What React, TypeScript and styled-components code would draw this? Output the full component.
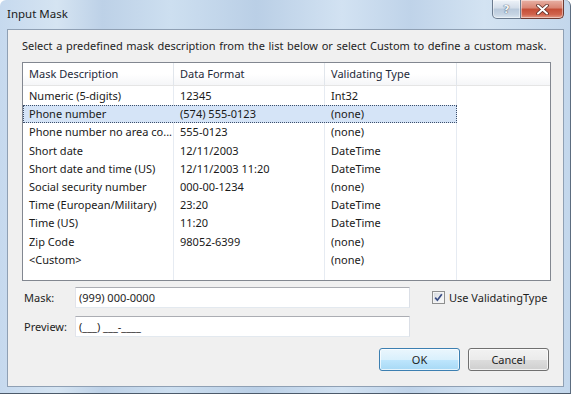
import React from "react";
import styled, { createGlobalStyle } from "styled-components";

const GlobalStyle = createGlobalStyle`
  html, body {
    margin: 0;
    padding: 0;
    background: #ffffff;
  }
  body {
    font-family: "Noto Sans", "Open Sans", sans-serif;
    font-size: 11px;
    color: #000;
  }
`;

const Window = styled.div`
  box-sizing: border-box;
  width: 571px;
  height: 394px;
  display: flex;
  flex-direction: column;
  padding: 0 6px 6px 7px;
  border-right: 1px solid #5c6d80;
  border-bottom: 1px solid #4c5a6a;
  border-radius: 6px 6px 0 0;
  background: linear-gradient(
    90deg,
    #c6d9ee 0%,
    #d5e4f2 10%,
    #bdd1e7 18%,
    #cddff0 30%,
    #bacfe6 45%,
    #d2e2f2 60%,
    #bfd3e9 72%,
    #d3e3f2 85%,
    #c3d7ec 100%
  );
`;

const TitleBar = styled.div`
  height: 29px;
  display: flex;
  align-items: flex-start;
`;

const Title = styled.div`
  margin-top: 6px;
  line-height: 16px;
  font-size: 11.5px;
  color: #1b1b1b;
`;

const CaptionGroup = styled.div`
  margin-left: auto;
  display: flex;
`;

const CaptionButton = styled.div<{ $close?: boolean }>`
  box-sizing: border-box;
  width: ${(p) => (p.$close ? "43px" : "29px")};
  height: 19px;
  display: flex;
  align-items: center;
  justify-content: center;
  border: 1px solid ${(p) => (p.$close ? "#6e3b33" : "#6b7b8f")};
  border-top: none;
  border-left: ${(p) => (p.$close ? "none" : undefined)};
  border-radius: ${(p) => (p.$close ? "0 0 5px 0" : "0 0 0 5px")};
  background: ${(p) =>
    p.$close
      ? "linear-gradient(#e8b1a5 0%, #d98472 45%, #c44d36 50%, #d0634c 80%, #e49a86 100%)"
      : "linear-gradient(#eef3f9 0%, #d3dde9 45%, #b9c9db 50%, #c6d4e3 80%, #dbe6f1 100%)"};
  box-shadow: inset 0 0 0 1px rgba(255, 255, 255, 0.45);
`;

const HelpGlyph = styled.span`
  font-family: "DejaVu Sans", sans-serif;
  font-weight: bold;
  font-size: 11px;
  color: #f4f6f9;
  text-shadow: 0 0 1px #44546a, 0 0 1px #44546a;
`;

const Client = styled.div`
  flex: 1;
  display: flex;
  flex-direction: column;
  background: #f0f0f0;
  border: 1px solid #8fa0b4;
  padding: 8px 12px 0 14px;
`;

const Instruction = styled.div`
  line-height: 16px;
  color: #1e1e1e;
  white-space: nowrap;
  word-spacing: 0.8px;
`;

const ListView = styled.div`
  margin-top: 8px;
  box-sizing: border-box;
  height: 219px;
  display: flex;
  flex-direction: column;
  border: 1px solid #828790;
  background: #ffffff;
`;

const Header = styled.div`
  display: flex;
  height: 23px;
  box-sizing: border-box;
  border-bottom: 1px solid #e5e5e5;
  background: linear-gradient(#ffffff 0%, #ffffff 50%, #f5f6f8 100%);
`;

const HeaderCell = styled.div<{ $width?: number }>`
  box-sizing: border-box;
  ${(p) => (p.$width ? `width: ${p.$width}px;` : "flex: 1;")}
  padding-left: 6px;
  line-height: 22px;
  color: #1e2a3a;
  border-right: ${(p) => (p.$width ? "1px solid #e1e6ec" : "none")};
`;

const Body = styled.div`
  flex: 1;
  padding-top: 1px;
  background-image: linear-gradient(
    90deg,
    transparent 0 150px,
    #e6ebf2 150px 151px,
    transparent 151px 301px,
    #e6ebf2 301px 302px,
    transparent 302px 433px,
    #e6ebf2 433px 434px,
    transparent 434px
  );
`;

const Row = styled.div`
  display: flex;
  height: 18.2px;
`;

const Item = styled.div<{ $selected?: boolean }>`
  box-sizing: border-box;
  width: 434px;
  display: grid;
  grid-template-columns: 151px 151px 130px;
  border: 1px ${(p) => (p.$selected ? "dotted #3d4f6b" : "solid transparent")};
  background: ${(p) => (p.$selected ? "#d5e4f7" : "transparent")};
`;

const Cell = styled.div`
  padding-left: 5px;
  line-height: 16.2px;
  white-space: nowrap;
  overflow: hidden;
  color: #1a1a1a;
`;

const Form = styled.div`
  margin-top: 6px;
  display: grid;
  grid-template-columns: 53px 335px 1fr;
  grid-auto-rows: 21px;
  row-gap: 8px;
  align-items: center;
`;

const Label = styled.div`
  padding-left: 2px;
  color: #1e1e1e;
`;

const TextBox = styled.div`
  box-sizing: border-box;
  height: 21px;
  padding-left: 3px;
  line-height: 19px;
  background: #ffffff;
  border: 1px solid;
  border-color: #abadb3 #dbdfe6 #e3e9ef #e2e3ea;
  color: #1e1e1e;
  white-space: nowrap;
`;

const CheckField = styled.label`
  display: flex;
  align-items: center;
  gap: 4px;
  padding-left: 22px;
  color: #1e1e1e;
`;

const CheckBox = styled.span`
  box-sizing: border-box;
  width: 13px;
  height: 13px;
  display: flex;
  align-items: center;
  justify-content: center;
  border: 1px solid #8e8f8f;
  background: linear-gradient(135deg, #d3d7dd 0%, #eef0f2 60%, #fbfbfb 100%);
  box-shadow: inset 0 0 0 1px #f4f4f4;
`;

const ButtonRow = styled.div`
  margin-top: 11px;
  display: flex;
  justify-content: flex-end;
  gap: 8px;
  padding-right: 2px;
`;

const Button = styled.button<{ $primary?: boolean }>`
  box-sizing: border-box;
  width: 81px;
  height: 23px;
  padding: 0;
  font: inherit;
  color: #1e1e1e;
  border-radius: 3px;
  border: 1px solid ${(p) => (p.$primary ? "#3c7fb1" : "#707070")};
  background: ${(p) =>
    p.$primary
      ? "linear-gradient(#eaf6fd 0%, #d9f0fc 50%, #bee6fd 51%, #a7d9f5 100%)"
      : "linear-gradient(#f2f2f2 0%, #ebebeb 50%, #dddddd 51%, #cfcfcf 100%)"};
  box-shadow: inset 0 0 0 1px rgba(255, 255, 255, 0.7);
`;

const masks = [
  ["Numeric (5-digits)", "12345", "Int32"],
  ["Phone number", "(574) 555-0123", "(none)"],
  ["Phone number no area co...", "555-0123", "(none)"],
  ["Short date", "12/11/2003", "DateTime"],
  ["Short date and time (US)", "12/11/2003 11:20", "DateTime"],
  ["Social security number", "000-00-1234", "(none)"],
  ["Time (European/Military)", "23:20", "DateTime"],
  ["Time (US)", "11:20", "DateTime"],
  ["Zip Code", "98052-6399", "(none)"],
  ["<Custom>", "", "(none)"],
];

export default function App() {
  return (
    <>
      <GlobalStyle />
      <Window>
        <TitleBar>
          <Title>Input Mask</Title>
          <CaptionGroup>
            <CaptionButton>
              <HelpGlyph>?</HelpGlyph>
            </CaptionButton>
            <CaptionButton $close>
              <svg width="13" height="11" viewBox="0 0 13 11">
                <path d="M2 1.5 L11 9.5 M11 1.5 L2 9.5" stroke="#5a2a24" strokeWidth="3.6" strokeLinecap="round" />
                <path d="M2 1.5 L11 9.5 M11 1.5 L2 9.5" stroke="#ffffff" strokeWidth="2" strokeLinecap="round" />
              </svg>
            </CaptionButton>
          </CaptionGroup>
        </TitleBar>
        <Client>
          <Instruction>
            Select a predefined mask description from the list below or select Custom to define a custom mask.
          </Instruction>
          <ListView>
            <Header>
              <HeaderCell $width={151}>Mask Description</HeaderCell>
              <HeaderCell $width={151}>Data Format</HeaderCell>
              <HeaderCell $width={132}>Validating Type</HeaderCell>
              <HeaderCell />
            </Header>
            <Body>
              {masks.map(([desc, format, type], i) => (
                <Row key={desc}>
                  <Item $selected={i === 1}>
                    <Cell>{desc}</Cell>
                    <Cell>{format}</Cell>
                    <Cell>{type}</Cell>
                  </Item>
                </Row>
              ))}
            </Body>
          </ListView>
          <Form>
            <Label>Mask:</Label>
            <TextBox>(999) 000-0000</TextBox>
            <CheckField>
              <CheckBox>
                <svg width="9" height="9" viewBox="0 0 9 9">
                  <path d="M1.2 4.6 L3.4 7.2 L7.8 1.2" fill="none" stroke="#3a4d84" strokeWidth="1.7" />
                </svg>
              </CheckBox>
              Use ValidatingType
            </CheckField>
            <Label>Preview:</Label>
            <TextBox>(___) ___-____</TextBox>
          </Form>
          <ButtonRow>
            <Button $primary>OK</Button>
            <Button>Cancel</Button>
          </ButtonRow>
        </Client>
      </Window>
    </>
  );
}
